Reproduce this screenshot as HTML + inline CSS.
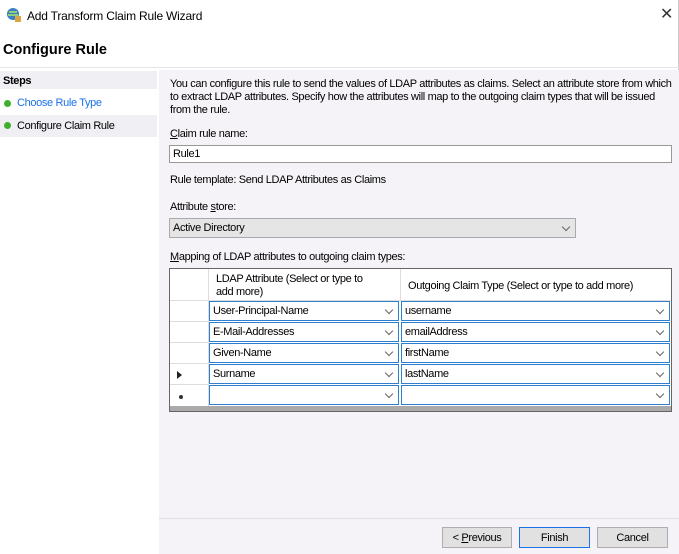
<!DOCTYPE html>
<html><head><style>
*{box-sizing:border-box;margin:0;padding:0}
body{width:679px;height:554px;position:relative;background:#fff;font-family:"Liberation Sans",sans-serif;font-size:11px;color:#000;overflow:hidden;letter-spacing:-0.35px}
.a{position:absolute}
.cb{position:absolute;height:20px;border:1px solid #2f7fd0;background:#fff;padding:3px 0 0 3px;font-size:11px}
.cb:after{content:"";position:absolute;right:6px;top:5px;width:5px;height:5px;border-right:1px solid #666;border-bottom:1px solid #666;transform:rotate(45deg)}
.btn{position:absolute;top:527px;height:21px;background:#e1e1e1;border:1px solid #adadad;text-align:center;padding-top:4px}
.dot{position:absolute;left:4px;width:7px;height:7px;border-radius:50%;background:#3fb02e}
</style></head><body>
<div class="a" style="left:0;top:0;width:679px;height:554px;border-right:1px solid #ccc"></div>
<svg class="a" style="left:6px;top:7px" width="16" height="16" viewBox="0 0 16 16"><circle cx="7" cy="7" r="6" fill="#3a7fc4"/><path d="M3 5h8M2 8h10" stroke="#8fd07a" stroke-width="2"/><rect x="9" y="9" width="6" height="6" fill="#d9a441"/></svg>
<div class="a" style="left:27px;top:9px;font-size:12px;letter-spacing:-0.2px">Add Transform Claim Rule Wizard</div>
<div class="a" style="left:660px;top:4px;font-size:16px;color:#333">✕</div>
<div class="a" style="left:3px;top:42px;font-size:14.5px;font-weight:bold;letter-spacing:0">Configure Rule</div>
<div class="a" style="left:0;top:67px;width:679px;height:1px;background:#e6e6e6"></div>
<div class="a" style="left:0;top:71px;width:157px;height:18px;background:#f0eff3"></div>
<div class="a" style="left:3px;top:75px;font-weight:bold">Steps</div>
<div class="a" style="left:0;top:115px;width:157px;height:22px;background:#f0eff3"></div>
<div class="dot" style="top:100px"></div>
<div class="a" style="left:17px;top:97px;color:#1a73e8">Choose Rule Type</div>
<div class="dot" style="top:122px"></div>
<div class="a" style="left:17px;top:120px">Configure Claim Rule</div>
<div class="a" style="left:159px;top:70px;width:520px;height:484px;background:#f5f3f7"></div>
<div class="a" style="left:170px;top:78px;width:505px;line-height:13px">You can configure this rule to send the values of LDAP attributes as claims. Select an attribute store from which to extract LDAP attributes. Specify how the attributes will map to the outgoing claim types that will be issued from the rule.</div>
<div class="a" style="left:170px;top:128px"><u>C</u>laim rule name:</div>
<div class="a" style="left:169px;top:145px;width:503px;height:18px;background:#fff;border:1px solid #999;padding:2px 3px">Rule1</div>
<div class="a" style="left:170px;top:174px">Rule template: Send LDAP Attributes as Claims</div>
<div class="a" style="left:170px;top:201px">Attribute <u>s</u>tore:</div>
<div class="cb" style="left:169px;top:218px;width:407px;background:#e5e5e5;border-color:#aaa">Active Directory</div>
<div class="a" style="left:170px;top:251px"><u>M</u>apping of LDAP attributes to outgoing claim types:</div>
<div class="a" style="left:169px;top:268px;width:503px;height:144px;border:1px solid #666;background:#aaa"></div>
<div class="a" style="left:170px;top:269px;width:501px;height:137px;background:#fff"></div>
<div class="a" style="left:170px;top:269px;width:39px;height:137px;background:#fff;border-right:1px solid #ddd"></div>
<div class="a" style="left:400px;top:269px;width:1px;height:32px;background:#ddd"></div>
<div class="a" style="left:170px;top:300px;width:501px;height:1px;background:#ddd"></div>
<div class="a" style="left:216px;top:273px;line-height:13px;width:165px">LDAP Attribute (Select or type to add more)</div>
<div class="a" style="left:408px;top:280px">Outgoing Claim Type (Select or type to add more)</div>
<div class="cb" style="left:209px;top:301px;width:190px">User-Principal-Name</div>
<div class="cb" style="left:401px;top:301px;width:269px">username</div>
<div class="cb" style="left:209px;top:322px;width:190px">E-Mail-Addresses</div>
<div class="cb" style="left:401px;top:322px;width:269px">emailAddress</div>
<div class="cb" style="left:209px;top:343px;width:190px">Given-Name</div>
<div class="cb" style="left:401px;top:343px;width:269px">firstName</div>
<div class="cb" style="left:209px;top:364px;width:190px">Surname</div>
<div class="cb" style="left:401px;top:364px;width:269px">lastName</div>
<div class="cb" style="left:209px;top:385px;width:190px"></div>
<div class="cb" style="left:401px;top:385px;width:269px"></div>
<div class="a" style="left:170px;top:321px;width:39px;height:1px;background:#ddd"></div>
<div class="a" style="left:170px;top:342px;width:39px;height:1px;background:#ddd"></div>
<div class="a" style="left:170px;top:363px;width:39px;height:1px;background:#ddd"></div>
<div class="a" style="left:170px;top:384px;width:39px;height:1px;background:#ddd"></div>
<div class="a" style="left:177px;top:371px;width:0;height:0;border-left:5px solid #222;border-top:4px solid transparent;border-bottom:4px solid transparent"></div>
<div class="a" style="left:179px;top:395px;width:4px;height:4px;border-radius:50%;background:#333"></div>
<div class="a" style="left:159px;top:518px;width:520px;height:1px;background:#e0dde3"></div>
<div class="btn" style="left:442px;width:70px">&lt; <u>P</u>revious</div>
<div class="btn" style="left:519px;width:71px;border:1px solid #1a73e8">Finish</div>
<div class="btn" style="left:597px;width:71px">Cancel</div>
</body></html>
